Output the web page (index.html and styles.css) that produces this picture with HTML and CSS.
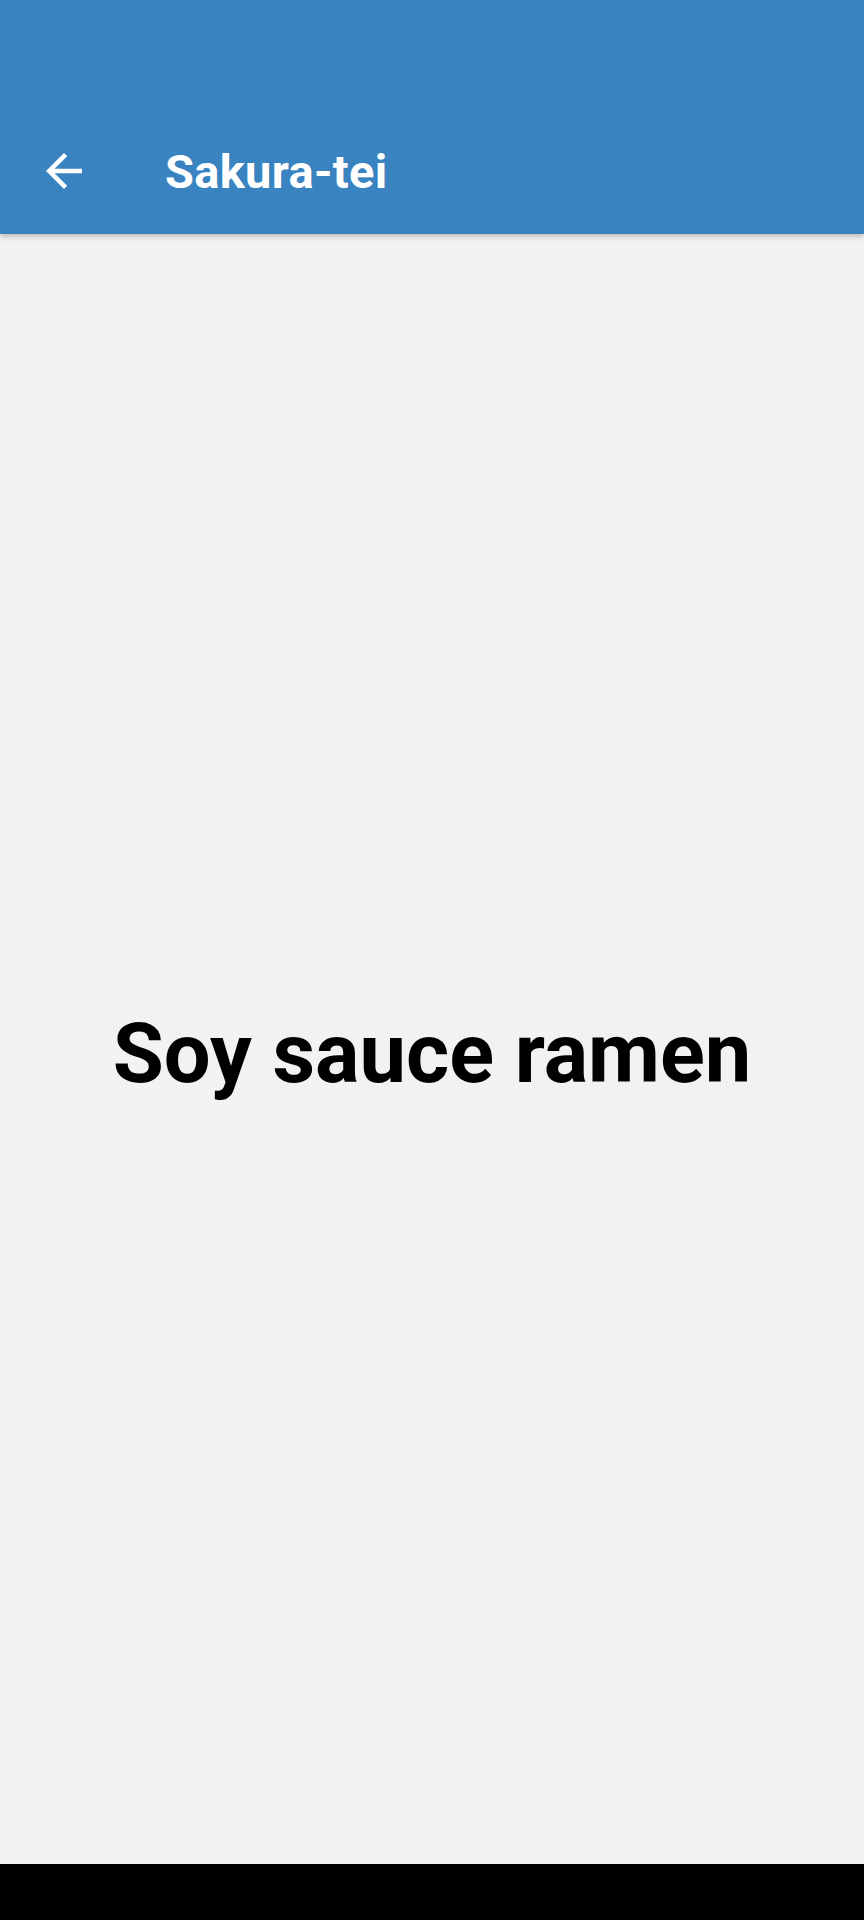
FILE: index.html
```html
<!DOCTYPE html>
<html>
<head>
<meta charset="utf-8">
<link rel="stylesheet" href="styles.css">
</head>
<body>
<div class="screen">
  <header class="appbar">
    <div class="statusbar"></div>
    <div class="toolbar">
      <button class="nav" aria-label="Back">
        <svg viewBox="0 0 24 24" width="54" height="54"><path fill="#fff" d="M20 11H7.83l5.59-5.59L12 4l-8 8 8 8 1.41-1.41L7.83 13H20v-2z"/></svg>
      </button>
      <h1 class="title">Sakura-tei</h1>
    </div>
  </header>
  <main class="content">
    <p class="dish">Soy sauce ramen</p>
  </main>
  <div class="navbar"></div>
</div>
</body>
</html>
```
FILE: styles.css
```css
* { box-sizing: border-box; }
html, body { margin: 0; padding: 0; }
body { font-family: Roboto, "Noto Sans", sans-serif; background: #f2f2f2; }
.screen { width: 864px; height: 1920px; display: flex; flex-direction: column; }
.appbar { background: #3a83c1; box-shadow: 0 2px 6px rgba(0,0,0,0.25); position: relative; z-index: 1; }
.statusbar { height: 108px; }
.toolbar { height: 126px; display: flex; align-items: center; padding-left: 37px; }
.nav { width: 54px; height: 54px; padding: 0; border: 0; background: none; display: flex; }
.title { margin: 0 0 0 74px; color: #fff; font-size: 47px; font-weight: 700; letter-spacing: 0.3px; }
.content { flex: 1; display: flex; align-items: center; justify-content: center; padding-top: 8px; }
.dish { margin: 0; font-size: 83px; font-weight: 700; color: #000; }
.navbar { height: 56px; background: #000; }
```
